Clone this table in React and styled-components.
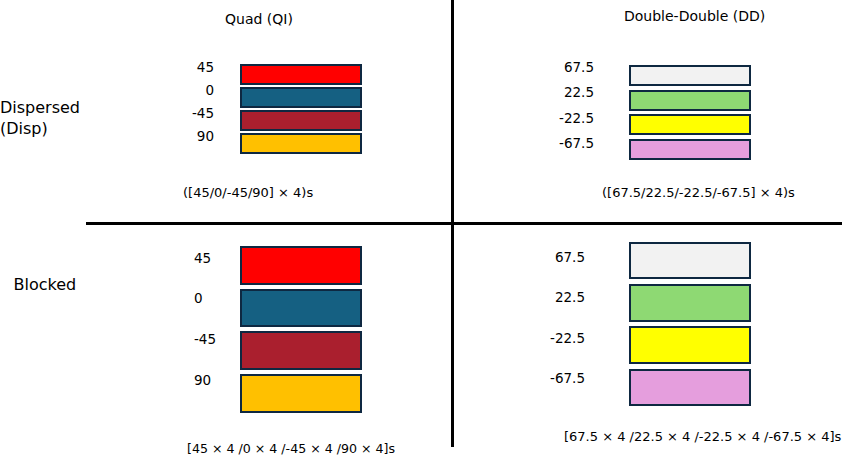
import styled, { createGlobalStyle } from "styled-components";

const GlobalStyle = createGlobalStyle`
  html, body {
    margin: 0;
    padding: 0;
    background: #ffffff;
  }
  body {
    font-family: "DejaVu Sans", "Liberation Sans", sans-serif;
    color: #000000;
  }
`;

// ply colours, Office palette
const PLY = {
  red: "#ff0000",
  blue: "#156082",
  crimson: "#aa1f2e",
  amber: "#ffc000",
  grey: "#f2f2f2",
  green: "#8ed973",
  yellow: "#ffff00",
  pink: "#e59edd",
};

const Sheet = styled.div`
  display: grid;
  grid-template-columns: 86px 365px 3px 388px;
  grid-template-rows: 222px 3px 222px 9px;
  width: 842px;
`;

const RowLabel = styled.div`
  grid-column: 1;
  grid-row: ${(p) => p.$row};
  padding-top: ${(p) => p.$top}px;
  padding-left: ${(p) => p.$left}px;
  font-size: 16px;
  line-height: 21px;
  white-space: nowrap;
`;

const VRule = styled.div`
  grid-column: 3;
  grid-row: 1 / 4;
  background: #000000;
`;

const HRule = styled.div`
  grid-column: 2 / 5;
  grid-row: 2;
  background: #000000;
`;

const Cell = styled.div`
  grid-column: ${(p) => p.$col};
  grid-row: ${(p) => p.$row};
  display: flex;
  flex-direction: column;
  align-items: flex-start;
`;

const Title = styled.div`
  margin-left: ${(p) => p.$x}px;
  margin-top: ${(p) => p.$top}px;
  font-size: 14px;
  line-height: 16px;
  white-space: nowrap;
`;

const Stack = styled.div`
  display: flex;
  align-items: flex-start;
  margin-left: ${(p) => p.$x}px;
  margin-top: ${(p) => p.$top}px;
  column-gap: ${(p) => p.$colGap}px;
`;

const Angles = styled.div`
  display: flex;
  flex-direction: column;
  width: ${(p) => p.$width}px;
  padding-top: ${(p) => p.$pad}px;
  row-gap: ${(p) => p.$gap}px;
  text-align: ${(p) => p.$align};
`;

const Angle = styled.span`
  font-size: 13.5px;
  line-height: 16px;
  white-space: nowrap;
`;

const Plies = styled.div`
  display: flex;
  flex-direction: column;
  padding-top: ${(p) => p.$pad}px;
  row-gap: ${(p) => p.$gap}px;
`;

const Ply = styled.div`
  box-sizing: border-box;
  width: 122px;
  height: ${(p) => p.$h}px;
  background: ${(p) => p.$fill};
  border: 2px solid #0e2841;
`;

const Formula = styled.div`
  margin-left: ${(p) => p.$x}px;
  margin-top: ${(p) => p.$top}px;
  font-size: ${(p) => p.$size || 13}px;
  line-height: 16px;
  white-space: nowrap;
`;

const quadPlies = [
  ["45", PLY.red],
  ["0", PLY.blue],
  ["-45", PLY.crimson],
  ["90", PLY.amber],
];

const ddPlies = [
  ["67.5", PLY.grey],
  ["22.5", PLY.green],
  ["-22.5", PLY.yellow],
  ["-67.5", PLY.pink],
];

const layups = [
  {
    key: "qi-disp",
    col: 2,
    row: 1,
    title: { text: "Quad (QI)", x: 139, top: 11 },
    plies: quadPlies,
    stack: { x: 84, top: 32, colGap: 26 },
    angles: { width: 44, pad: 0, gap: 7, align: "right" },
    boxes: { pad: 5, h: 21, gap: 2 },
    formula: { text: "([45/0/-45/90] \u00d7 4)s", x: 97, top: 31 },
  },
  {
    key: "dd-disp",
    col: 4,
    row: 1,
    title: { text: "Double-Double (DD)", x: 170, top: 7.5 },
    plies: ddPlies,
    stack: { x: 96, top: 35.5, colGap: 35 },
    angles: { width: 44, pad: 0, gap: 9.3, align: "right" },
    boxes: { pad: 6, h: 21, gap: 3.7 },
    formula: { text: "([67.5/22.5/-22.5/-67.5] \u00d7 4)s", x: 148, top: 25.4 },
  },
  {
    key: "qi-block",
    col: 2,
    row: 3,
    plies: quadPlies,
    stack: { x: 108, top: 21, colGap: 0 },
    angles: { width: 46, pad: 3.5, gap: 24.7, align: "left" },
    boxes: { pad: 0, h: 38.5, gap: 4.2 },
    formula: {
      text: "[45 \u00d7 4 /0 \u00d7 4 /-45 \u00d7 4 /90 \u00d7 4]s",
      x: 101,
      top: 28.4,
      size: 12.6,
    },
  },
  {
    key: "dd-block",
    col: 4,
    row: 3,
    plies: ddPlies,
    stack: { x: 87, top: 16.7, colGap: 44 },
    angles: { width: 44, pad: 7.2, gap: 24.5, align: "right" },
    boxes: { pad: 0, h: 37.6, gap: 4.8 },
    formula: {
      text: "[67.5 \u00d7 4 /22.5 \u00d7 4 /-22.5 \u00d7 4 /-67.5 \u00d7 4]s",
      x: 110,
      top: 23,
    },
  },
];

function Layup({ cfg }) {
  const { title, plies, stack, angles, boxes, formula } = cfg;
  return (
    <Cell $col={cfg.col} $row={cfg.row}>
      {title && (
        <Title $x={title.x} $top={title.top}>
          {title.text}
        </Title>
      )}
      <Stack $x={stack.x} $top={stack.top} $colGap={stack.colGap}>
        <Angles
          $width={angles.width}
          $pad={angles.pad}
          $gap={angles.gap}
          $align={angles.align}
        >
          {plies.map(([deg]) => (
            <Angle key={deg}>{deg}</Angle>
          ))}
        </Angles>
        <Plies $pad={boxes.pad} $gap={boxes.gap}>
          {plies.map(([deg, fill]) => (
            <Ply key={deg} $h={boxes.h} $fill={fill} />
          ))}
        </Plies>
      </Stack>
      <Formula $x={formula.x} $top={formula.top} $size={formula.size}>
        {formula.text}
      </Formula>
    </Cell>
  );
}

export default function App() {
  return (
    <>
      <GlobalStyle />
      <Sheet>
        <RowLabel $row={1} $top={97.3} $left={0}>
          Dispersed
          <br />
          (Disp)
        </RowLabel>
        <RowLabel $row={3} $top={49} $left={13.5}>
          Blocked
        </RowLabel>
        {layups.map((cfg) => (
          <Layup key={cfg.key} cfg={cfg} />
        ))}
        <VRule />
        <HRule />
      </Sheet>
    </>
  );
}
